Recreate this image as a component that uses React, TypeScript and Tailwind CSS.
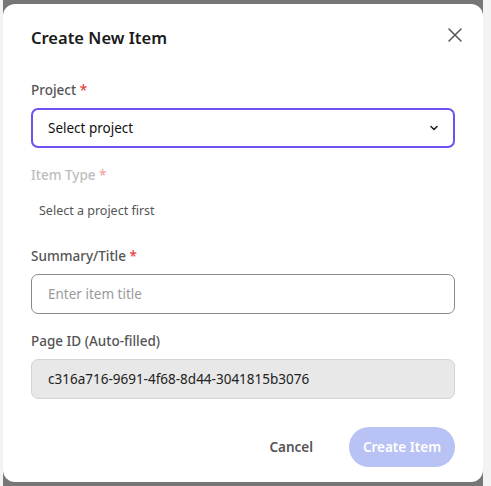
import React from "react";

export default function App() {
  const font = { fontFamily: '"Noto Sans", "Open Sans", sans-serif' };
  return (
    <div className="w-[491px] h-[486px] flex bg-[#767676] overflow-hidden" style={font}>
      <div className="w-[3px] h-full bg-[#f3f3f3]" />
      <div className="flex-1 h-full pt-[4px]">
        <div className="h-[478px] bg-white rounded-[12px] px-[28px] pt-[20px] flex flex-col">
          <div className="flex items-start justify-between">
            <h2 className="text-[16.5px] leading-[28px] font-semibold text-[#1a1a1a]">Create New Item</h2>
            <button className="mt-[1px] mr-[-10px] w-[20px] h-[20px] flex items-center justify-center text-[#555]">
              <svg width="14" height="14" viewBox="0 0 14 14" fill="none" stroke="currentColor" strokeWidth="1.5" strokeLinecap="round">
                <path d="M1 1L13 13M13 1L1 13" />
              </svg>
            </button>
          </div>

          <label className="mt-[28px] text-[13.5px] leading-[20px] font-medium text-[#555]">
            Project <span className="text-[#e53e3e]">*</span>
          </label>
          <div className="mt-[8px] h-[40px] rounded-[7px] border-2 border-[#7050f0] flex items-center justify-between pl-[15px] pr-[14px]">
            <span className="text-[13.5px] text-[#111]">Select project</span>
            <svg width="10" height="10" viewBox="0 0 10 10" fill="none" stroke="#222" strokeWidth="1.6" strokeLinecap="round" strokeLinejoin="round">
              <path d="M2 3.5L5 6.5L8 3.5" />
            </svg>
          </div>

          <label className="mt-[17px] text-[13.5px] leading-[20px] font-medium text-[#bdbdbd]">
            Item Type <span className="text-[#f3a5a5]">*</span>
          </label>
          <div className="mt-[16px] pl-[8px] text-[12.5px] leading-[20px] text-[#555]">Select a project first</div>

          <label className="mt-[25px] text-[13.5px] leading-[20px] font-medium text-[#555]">
            Summary/Title <span className="text-[#e53e3e]">*</span>
          </label>
          <div className="mt-[8px] h-[40px] rounded-[7px] border border-[#8a8a8a] flex items-center pl-[16px]">
            <span className="text-[13.5px] text-[#9a9a9a]">Enter item title</span>
          </div>

          <label className="mt-[17px] text-[13.5px] leading-[20px] font-medium text-[#555]">Page ID (Auto-filled)</label>
          <div className="mt-[8px] h-[40px] rounded-[7px] border border-[#d4d4d4] bg-[#e8e8e8] flex items-center pl-[16px]">
            <span className="text-[13.5px] text-[#222]">c316a716-9691-4f68-8d44-3041815b3076</span>
          </div>

          <div className="mt-[28px] flex items-center justify-end gap-[20px]">
            <button className="h-[40px] px-[16px] text-[13.5px] font-semibold text-[#555]">Cancel</button>
            <button className="h-[40px] w-[106px] rounded-full bg-[#b8c2f4] text-[13.5px] font-semibold text-white">Create Item</button>
          </div>
        </div>
      </div>
      <div className="w-[8px] h-full bg-[#f3f3f3]" />
    </div>
  );
}
